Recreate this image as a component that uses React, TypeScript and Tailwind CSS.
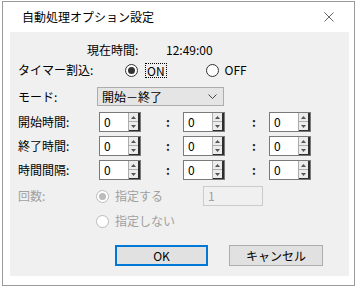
import React from "react";

const font = { fontFamily: '"Noto Sans CJK JP", "Noto Sans", sans-serif' };

const Radio: React.FC<{ checked?: boolean; disabled?: boolean }> = ({ checked, disabled }) => (
  <div
    className={`w-[13px] h-[13px] rounded-full border flex items-center justify-center shrink-0 bg-white ${
      disabled ? "border-[#bcbcbc]" : "border-[#333333]"
    }`}
  >
    {checked && <div className={`w-[7px] h-[7px] rounded-full ${disabled ? "bg-[#bcbcbc]" : "bg-[#333333]"}`} />}
  </div>
);

const SpinBox: React.FC = () => (
  <div className="w-[42px] h-[20px] flex border border-[#7a7a7a] bg-white shrink-0">
    <div className="flex-1 pl-[4px] text-[12px] leading-[18px] text-black">0</div>
    <div className="w-[12px] flex flex-col border-l border-[#adadad] border-r-2 border-r-[#2e2e2e]">
      <div className="flex-1 bg-[#ececec] border-b border-[#adadad] flex items-center justify-center">
        <svg width="5" height="3" viewBox="0 0 5 3">
          <polygon points="2.5,0 5,3 0,3" fill="#555" />
        </svg>
      </div>
      <div className="flex-1 bg-[#ececec] border-b border-[#2e2e2e] flex items-center justify-center">
        <svg width="5" height="3" viewBox="0 0 5 3">
          <polygon points="0,0 5,0 2.5,3" fill="#555" />
        </svg>
      </div>
    </div>
  </div>
);

const Colon: React.FC = () => (
  <div className="w-[42px] shrink-0 pl-[25px] text-[12px] font-bold text-[#222]">:</div>
);

const TimeRow: React.FC<{ label: string; mt: string }> = ({ label, mt }) => (
  <div className={`flex items-center h-[20px] ${mt}`}>
    <div className="w-[81px] shrink-0 text-[12px] text-black">{label}</div>
    <SpinBox />
    <Colon />
    <SpinBox />
    <div className="w-[44px] shrink-0 pl-[27px] text-[12px] font-bold text-[#222]">:</div>
    <SpinBox />
  </div>
);

export default function App() {
  return (
    <div className="w-[357px] h-[288px] bg-white overflow-hidden" style={font}>
      <div className="ml-[2px] mt-[1px] w-[353px] h-[285px] border border-[#9a9a9a] flex flex-col bg-white">
        {/* title bar */}
        <div className="h-[30px] shrink-0 flex items-center justify-between pl-[19px] pr-[20px]">
          <span className="text-[12px] text-black">自動処理オプション設定</span>
          <svg width="10" height="10" viewBox="0 0 10 10">
            <path d="M0.5 0.5 L9.5 9.5 M9.5 0.5 L0.5 9.5" stroke="#666" strokeWidth="1" />
          </svg>
        </div>

        {/* client area */}
        <div className="ml-[7px] mr-[5px] h-[244px] bg-[#f0f0f0] pl-[8px] flex flex-col">
          <div className="flex items-center h-[20px] mt-[8px] text-[12px] text-black">
            <span className="ml-[69px] w-[79px] shrink-0">現在時間:</span>
            <span>12:49:00</span>
          </div>

          <div className="flex items-center h-[20px] text-[12px] text-black">
            <span className="w-[107px] shrink-0">タイマー割込:</span>
            <Radio checked />
            <span className="ml-[7px] border border-dotted border-black px-[1px] leading-[13px]">ON</span>
            <span className="w-[39px] shrink-0" />
            <Radio />
            <span className="ml-[6px]">OFF</span>
          </div>

          <div className="flex items-center h-[19px] mt-[7px] text-[12px] text-black">
            <span className="w-[79px] shrink-0">モード:</span>
            <div className="w-[127px] h-[19px] bg-[#e5e5e5] border border-[#adadad] flex items-center justify-between pl-[4px] pr-[6px]">
              <span>開始－終了</span>
              <svg width="9" height="5" viewBox="0 0 9 5">
                <polyline points="0.5,0.5 4.5,4.5 8.5,0.5" fill="none" stroke="#444" strokeWidth="1" />
              </svg>
            </div>
          </div>

          <TimeRow label="開始時間:" mt="mt-[6px]" />
          <TimeRow label="終了時間:" mt="mt-[4px]" />
          <TimeRow label="時間間隔:" mt="mt-[4px]" />

          <div className="flex items-center h-[20px] mt-[6px] text-[12px] text-[#a0a0a0]">
            <span className="w-[78px] shrink-0">回数:</span>
            <Radio checked disabled />
            <span className="ml-[6px] w-[88px] shrink-0">指定する</span>
            <div className="w-[60px] h-[20px] border border-[#cccccc] bg-[#f0f0f0] pl-[4px] leading-[18px]">1</div>
          </div>

          <div className="flex items-center h-[20px] mt-[5px] text-[12px] text-[#a0a0a0]">
            <span className="w-[78px] shrink-0" />
            <Radio disabled />
            <span className="ml-[6px]">指定しない</span>
          </div>

          <div className="flex items-center mt-[14px] text-[12px] text-black">
            <span className="w-[97px] shrink-0" />
            <div className="w-[93px] h-[21px] bg-[#e1e1e1] border-2 border-[#0078d7] flex items-center justify-center">
              OK
            </div>
            <span className="w-[21px] shrink-0" />
            <div className="w-[94px] h-[21px] bg-[#e1e1e1] border border-[#adadad] flex items-center justify-center">
              キャンセル
            </div>
          </div>
        </div>
      </div>
    </div>
  );
}
